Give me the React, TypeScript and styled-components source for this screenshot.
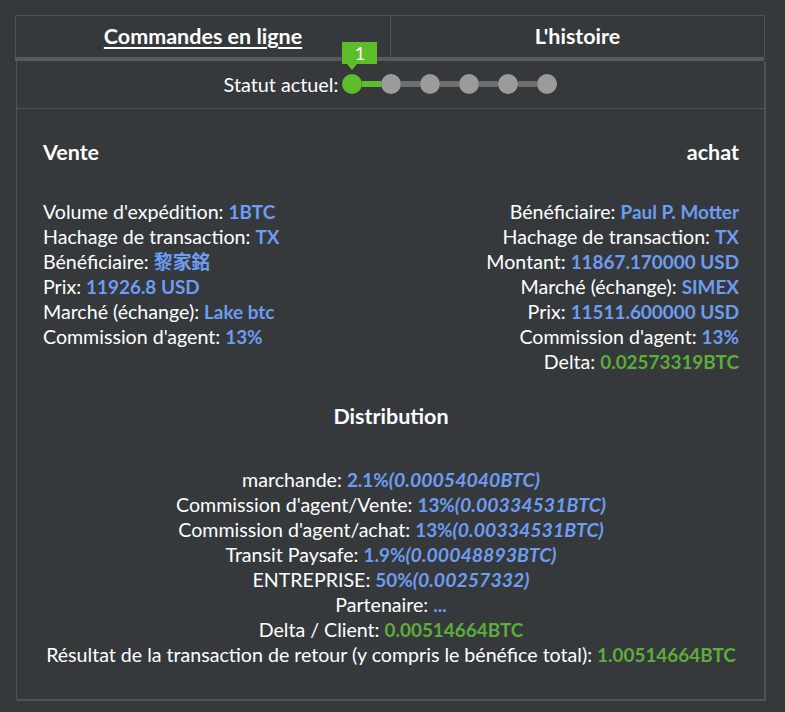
import React from "react";
import styled, { createGlobalStyle } from "styled-components";

const C = {
  bg: "#35393b",
  line: "#4f5355",
  bar: "#575b5d",
  text: "#ffffff",
  blue: "#6e9cf2",
  green: "#5eac3a",
  step: "#5dbd2b",
  dot: "#9b9b9b",
  seg: "#6e6e6e",
};

const Global = createGlobalStyle`
  html, body { margin: 0; padding: 0; background: ${C.bg}; }
  body { font-family: Lato, "Noto Sans", "Noto Sans CJK TC", sans-serif; color: ${C.text}; }
`;

const Page = styled.div`
  padding: 15px 20px 13px 15px;
  min-height: 712px;
  box-sizing: border-box;
`;

const Tabs = styled.div`
  display: grid;
  grid-template-columns: 374px 1fr;
  border: 1px solid ${C.line};
  border-bottom: none;
  height: 41px;
`;

const Tab = styled.div<{ $active?: boolean }>`
  display: flex;
  align-items: center;
  justify-content: center;
  font-size: 21.5px;
  font-weight: 700;
  padding-bottom: 2px;
  text-decoration: ${(p) => (p.$active ? "underline" : "none")};
  text-underline-offset: 3px;
  text-decoration-thickness: 2px;
  & + & { border-left: 1px solid ${C.line}; }
`;

const Bar = styled.div`
  height: 4px;
  background: ${C.bar};
  margin-right: 1px;
`;

const Panel = styled.div`
  border: 1px solid ${C.line};
  border-top: none;
  box-shadow: 1px 1px 0 ${C.line};
  margin-left: 1px;
`;

const StatusRow = styled.div`
  height: 48px;
  display: flex;
  align-items: center;
  justify-content: center;
  border-bottom: 1px solid ${C.line};
  font-size: 19.8px;
  padding-bottom: 2px;
  box-sizing: border-box;
`;

const StatusLabel = styled.span`
  margin-right: 4px;
`;

const Stepper = styled.div`
  display: flex;
  align-items: center;
`;

const Dot = styled.div<{ $on?: boolean }>`
  position: relative;
  width: 20px;
  height: 20px;
  border-radius: 50%;
  background: ${(p) => (p.$on ? C.step : C.dot)};
`;

const Seg = styled.div<{ $on?: boolean }>`
  width: 19px;
  height: 6px;
  background: ${(p) => (p.$on ? C.step : C.seg)};
`;

const Badge = styled.div`
  position: absolute;
  left: 0;
  bottom: 30px;
  width: 35px;
  height: 22px;
  background: ${C.step};
  color: #fff;
  font-size: 18px;
  line-height: 22px;
  text-align: center;
  &::after {
    content: "";
    position: absolute;
    left: 5px;
    top: 22px;
    border-left: 5px solid transparent;
    border-right: 5px solid transparent;
    border-top: 6px solid ${C.step};
  }
`;

const Body = styled.div`
  padding: 31px 25px 32px 26px;
  font-size: 19.6px;
  line-height: 25px;
`;

const Columns = styled.div`
  display: flex;
  justify-content: space-between;
`;

const Col = styled.div<{ $right?: boolean }>`
  display: flex;
  flex-direction: column;
  align-items: ${(p) => (p.$right ? "flex-end" : "flex-start")};
  text-align: ${(p) => (p.$right ? "right" : "left")};
`;

const Heading = styled.div<{ $center?: boolean }>`
  font-weight: 700;
  font-size: 21.5px;
  margin-bottom: 34px;
  text-align: ${(p) => (p.$center ? "center" : "inherit")};
`;

const Row = styled.div`
  white-space: nowrap;
`;

const Val = styled.span<{ $green?: boolean; $italic?: boolean }>`
  color: ${(p) => (p.$green ? C.green : C.blue)};
  font-weight: 700;
  font-size: ${(p) => (p.$italic ? "19.5px" : "18.9px")};
  font-style: ${(p) => (p.$italic ? "italic" : "normal")};
`;

const Dist = styled.div`
  margin-top: 30px;
  display: flex;
  flex-direction: column;
  align-items: center;
  text-align: center;
`;

const DistHeading = styled(Heading)`
  margin-bottom: 38px;
`;

export default function App() {
  return (
    <>
      <Global />
      <Page>
        <Tabs>
          <Tab $active>Commandes en ligne</Tab>
          <Tab>L'histoire</Tab>
        </Tabs>
        <Bar />
        <Panel>
          <StatusRow>
            <StatusLabel>Statut actuel:</StatusLabel>
            <Stepper>
              <Dot $on>
                <Badge>1</Badge>
              </Dot>
              <Seg $on />
              <Dot />
              <Seg />
              <Dot />
              <Seg />
              <Dot />
              <Seg />
              <Dot />
              <Seg />
              <Dot />
            </Stepper>
          </StatusRow>
          <Body>
            <Columns>
              <Col>
                <Heading>Vente</Heading>
                <Row>Volume d'expédition: <Val>1BTC</Val></Row>
                <Row>Hachage de transaction: <Val>TX</Val></Row>
                <Row>Bénéficiaire: <Val>黎家銘</Val></Row>
                <Row>Prix: <Val>11926.8 USD</Val></Row>
                <Row>Marché (échange): <Val>Lake btc</Val></Row>
                <Row>Commission d'agent: <Val>13%</Val></Row>
              </Col>
              <Col $right>
                <Heading>achat</Heading>
                <Row>Bénéficiaire: <Val>Paul P. Motter</Val></Row>
                <Row>Hachage de transaction: <Val>TX</Val></Row>
                <Row>Montant: <Val>11867.170000 USD</Val></Row>
                <Row>Marché (échange): <Val>SIMEX</Val></Row>
                <Row>Prix: <Val>11511.600000 USD</Val></Row>
                <Row>Commission d'agent: <Val>13%</Val></Row>
                <Row>Delta: <Val $green>0.02573319BTC</Val></Row>
              </Col>
            </Columns>
            <Dist>
              <DistHeading $center>Distribution</DistHeading>
              <Row>marchande: <Val>2.1%</Val><Val $italic>(0.00054040BTC)</Val></Row>
              <Row>Commission d'agent/Vente: <Val>13%</Val><Val $italic>(0.00334531BTC)</Val></Row>
              <Row>Commission d'agent/achat: <Val>13%</Val><Val $italic>(0.00334531BTC)</Val></Row>
              <Row>Transit Paysafe: <Val>1.9%</Val><Val $italic>(0.00048893BTC)</Val></Row>
              <Row>ENTREPRISE: <Val>50%</Val><Val $italic>(0.00257332)</Val></Row>
              <Row>Partenaire: <Val>...</Val></Row>
              <Row>Delta / Client: <Val $green>0.00514664BTC</Val></Row>
              <Row>Résultat de la transaction de retour (y compris le bénéfice total): <Val $green>1.00514664BTC</Val></Row>
            </Dist>
          </Body>
        </Panel>
      </Page>
    </>
  );
}
